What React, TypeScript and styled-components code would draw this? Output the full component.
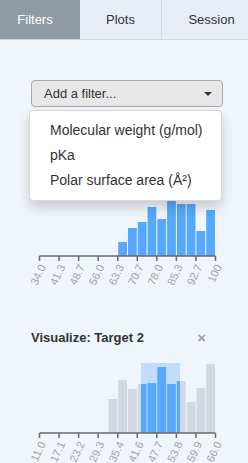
import React from "react";
import styled, { createGlobalStyle } from "styled-components";

const GlobalStyle = createGlobalStyle`
  html, body {
    margin: 0;
    padding: 0;
    background: #f0f4fb;
    font-family: "Liberation Sans", Arial, sans-serif;
    color: #333;
  }
`;

const Page = styled.div`
  width: 248px;
  height: 463px;
  overflow: hidden;
  background: #f0f4fb;
`;

const TabBar = styled.div`
  display: flex;
  height: 40px;
  overflow: hidden;
  background: #e8edf5;
  border-bottom: 1px solid #d3d8e0;
  box-sizing: border-box;
`;

type TabProps = { $active?: boolean; $width: number; $shift?: number };
const Tab = styled.div<TabProps>`
  flex: 0 0 ${({ $width }) => $width}px;
  display: flex;
  align-items: center;
  justify-content: center;
  padding-right: ${({ $shift }) => $shift ?? 0}px;
  box-sizing: border-box;
  font-size: 13px;
  color: ${({ $active }) => ($active ? "#fff" : "#333")};
  background: ${({ $active }) => ($active ? "#8e9aa6" : "transparent")};
  border-right: 1px solid ${({ $active }) => ($active ? "#8e9aa6" : "#d6dbe3")};
`;

const Body = styled.div`
  padding: 40px 25px 0 25px;
`;

const DropdownWrap = styled.div`
  position: relative;
  margin: 0 0 44px 6px;
  width: 192px;
`;

const DropdownButton = styled.div`
  height: 27px;
  box-sizing: border-box;
  border: 1px solid #a9a9a9;
  border-radius: 4px;
  background: #e7e7e7;
  display: flex;
  align-items: center;
  justify-content: space-between;
  padding: 0 10px 0 12px;
  font-size: 13px;
  color: #333;
`;

const Caret = styled.span`
  width: 0;
  height: 0;
  border-left: 4px solid transparent;
  border-right: 4px solid transparent;
  border-top: 4px solid #333;
`;

const Menu = styled.div`
  position: absolute;
  top: 30px;
  left: -2px;
  width: 193px;
  box-sizing: border-box;
  padding: 7px 0;
  background: #fff;
  border: 1px solid rgba(0, 0, 0, 0.15);
  border-radius: 4px;
  box-shadow: 0 6px 12px rgba(0, 0, 0, 0.175);
  z-index: 10;
`;

const MenuItem = styled.div`
  height: 25px;
  line-height: 25px;
  padding-left: 20px;
  font-size: 14px;
  color: #333;
  white-space: nowrap;
`;

const Section = styled.div`
  margin-bottom: 34px;
`;

const TitleRow = styled.div`
  height: 18px;
  display: flex;
  align-items: center;
  justify-content: space-between;
  padding: 0 17px 0 6px;
`;

const Title = styled.span`
  font-size: 13px;
  font-weight: bold;
  color: #333;
`;

const Close = styled.span`
  font-size: 15px;
  font-weight: bold;
  color: #a0a0a0;
  line-height: 1;
`;

const ChartSvg = styled.svg`
  display: block;
`;

const AXIS_Y = 87;
const X0 = 14.5;
const X1 = 190.5;
const BINS = 18;
const BIN_W = (X1 - X0) / BINS;

type HistProps = {
  id: string;
  heights: Record<number, number>;
  labels: string[];
  selection?: [number, number];
};

const Histogram = ({ id, heights, labels, selection }: HistProps) => {
  const bars = Object.entries(heights).map(([k, h]) => {
    const i = Number(k);
    return { x: X0 + i * BIN_W + 0.5, w: BIN_W - 1, h };
  });
  const step = (X1 - X0) / (labels.length - 1);
  return (
    <ChartSvg width={198} height={125}>
      <defs>
        <pattern id={`dots-${id}`} width="4" height="4" patternUnits="userSpaceOnUse">
          <rect width="4" height="4" fill="#d4d8e0" />
          <rect x="1" y="1" width="1" height="1" fill="#c9cdd6" />
        </pattern>
        {selection && (
          <clipPath id={`clip-${id}`}>
            <rect x={selection[0]} y={0} width={selection[1] - selection[0]} height={AXIS_Y} />
          </clipPath>
        )}
      </defs>
      {selection ? (
        <>
          {bars.map((b, i) => (
            <rect key={i} x={b.x} y={AXIS_Y - b.h} width={b.w} height={b.h} fill={`url(#dots-${id})`} />
          ))}
          <rect
            x={selection[0]}
            y={AXIS_Y - 70}
            width={selection[1] - selection[0]}
            height={70}
            fill="#c3dcfa"
          />
          <g clipPath={`url(#clip-${id})`}>
            {bars.map((b, i) => (
              <rect key={i} x={b.x} y={AXIS_Y - b.h} width={b.w} height={b.h} fill="#55a8fb" />
            ))}
          </g>
        </>
      ) : (
        bars.map((b, i) => (
          <rect key={i} x={b.x} y={AXIS_Y - b.h} width={b.w} height={b.h} fill="#55a8fb" />
        ))
      )}
      <line x1={X0} x2={X1} y1={AXIS_Y} y2={AXIS_Y} stroke="#6a6a6a" strokeWidth={1.5} />
      {labels.map((l, k) => {
        const x = X0 + k * step;
        return (
          <g key={l}>
            <line x1={x} x2={x} y1={AXIS_Y} y2={AXIS_Y + 5} stroke="#6a6a6a" strokeWidth={1.5} />
            <text
              transform={`translate(${x + 3},${AXIS_Y + 9}) rotate(-65)`}
              textAnchor="end"
              dy="0.35em"
              fontSize="11"
              fill="#a3a3a3"
              fontFamily="Liberation Sans, Arial, sans-serif"
            >
              {l}
            </text>
          </g>
        );
      })}
    </ChartSvg>
  );
};

const chart1 = { 8: 14, 9: 28, 10: 34, 11: 49, 12: 37, 13: 63, 14: 52, 15: 52, 16: 25, 17: 46 };
const chart2 = { 0: 1, 7: 34, 8: 53, 9: 44, 10: 49, 11: 50, 12: 66, 13: 49, 14: 52, 15: 31, 16: 45, 17: 69 };

export default function App() {
  return (
    <Page>
      <GlobalStyle />
      <TabBar>
        <Tab $active $width={80} $shift={9}>Filters</Tab>
        <Tab $width={82}>Plots</Tab>
        <Tab $width={100}>Session</Tab>
      </TabBar>
      <Body>
        <DropdownWrap>
          <DropdownButton>
            <span>Add a filter...</span>
            <Caret />
          </DropdownButton>
          <Menu>
            <MenuItem>Molecular weight (g/mol)</MenuItem>
            <MenuItem>pKa</MenuItem>
            <MenuItem>Polar surface area (Å²)</MenuItem>
          </Menu>
        </DropdownWrap>
        <Section>
          <TitleRow>
            <Title>Visualize: Target 1</Title>
            <Close>×</Close>
          </TitleRow>
          <Histogram
            id="t1"
            heights={chart1}
            labels={["34.0", "41.3", "48.7", "56.0", "63.3", "70.7", "78.0", "85.3", "92.7", "100"]}
          />
        </Section>
        <Section>
          <TitleRow>
            <Title>Visualize: Target 2</Title>
            <Close>×</Close>
          </TitleRow>
          <Histogram
            id="t2"
            heights={chart2}
            selection={[116, 155]}
            labels={["11.0", "17.1", "23.2", "29.3", "35.4", "41.6", "47.7", "53.8", "59.9", "66.0"]}
          />
        </Section>
      </Body>
    </Page>
  );
}
